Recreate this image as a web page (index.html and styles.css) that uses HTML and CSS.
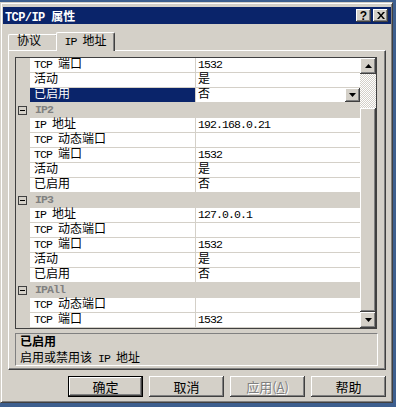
FILE: index.html
```html
<!DOCTYPE html>
<html lang="zh-CN">
<head>
  <meta charset="UTF-8">
  <title>TCP/IP 属性</title>
  <link rel="stylesheet" href="styles.css">
</head>
<body>
  <div class="window">
    <!-- 标题栏 -->
    <div class="titlebar">
      <span class="title"><span class="en">TCP/IP </span>属性</span>
      <div class="caption-btns">
        <div class="cap-btn">?</div>
        <div class="cap-btn">
          <svg width="8" height="7" viewBox="0 0 8 7"><path d="M0 0h2l2 2.5L6 0h2L5 3.5 8 7H6L4 4.5 2 7H0l3-3.5z" fill="#000"/></svg>
        </div>
      </div>
    </div>

    <!-- 选项卡 -->
    <div class="tabs">
      <div class="tab">协议</div>
      <div class="tab active"><span class="en">IP </span>地址</div>
    </div>

    <div class="panel">
      <div class="grid">
        <div class="list">
          <div class="row"><div class="gutter"></div><div class="name"><span class="en">TCP </span>端口</div><div class="value en">1532</div></div>
          <div class="row"><div class="gutter"></div><div class="name">活动</div><div class="value">是</div></div>
          <div class="row selected"><div class="gutter"></div><div class="name">已启用</div><div class="value">否<div class="drop-btn"><svg width="7" height="4" viewBox="0 0 7 4"><path d="M0 0h7L3.5 4z" fill="#000"/></svg></div></div></div>

          <div class="row cat"><div class="gutter"><span class="toggle"></span></div><div class="cat-label en">IP2</div></div>
          <div class="row"><div class="gutter"></div><div class="name"><span class="en">IP </span>地址</div><div class="value en">192.168.0.21</div></div>
          <div class="row"><div class="gutter"></div><div class="name"><span class="en">TCP </span>动态端口</div><div class="value"></div></div>
          <div class="row"><div class="gutter"></div><div class="name"><span class="en">TCP </span>端口</div><div class="value en">1532</div></div>
          <div class="row"><div class="gutter"></div><div class="name">活动</div><div class="value">是</div></div>
          <div class="row"><div class="gutter"></div><div class="name">已启用</div><div class="value">否</div></div>

          <div class="row cat"><div class="gutter"><span class="toggle"></span></div><div class="cat-label en">IP3</div></div>
          <div class="row"><div class="gutter"></div><div class="name"><span class="en">IP </span>地址</div><div class="value en">127.0.0.1</div></div>
          <div class="row"><div class="gutter"></div><div class="name"><span class="en">TCP </span>动态端口</div><div class="value"></div></div>
          <div class="row"><div class="gutter"></div><div class="name"><span class="en">TCP </span>端口</div><div class="value en">1532</div></div>
          <div class="row"><div class="gutter"></div><div class="name">活动</div><div class="value">是</div></div>
          <div class="row"><div class="gutter"></div><div class="name">已启用</div><div class="value">否</div></div>

          <div class="row cat"><div class="gutter"><span class="toggle"></span></div><div class="cat-label en">IPAll</div></div>
          <div class="row"><div class="gutter"></div><div class="name"><span class="en">TCP </span>动态端口</div><div class="value"></div></div>
          <div class="row"><div class="gutter"></div><div class="name"><span class="en">TCP </span>端口</div><div class="value en">1532</div></div>
        </div>

        <!-- 滚动条 -->
        <div class="scrollbar">
          <div class="sb-btn"><svg width="7" height="4" viewBox="0 0 7 4"><path d="M3.5 0L7 4H0z" fill="#000"/></svg></div>
          <div class="sb-track"></div>
          <div class="sb-thumb"></div>
          <div class="sb-btn"><svg width="7" height="4" viewBox="0 0 7 4"><path d="M0 0h7L3.5 4z" fill="#000"/></svg></div>
        </div>
      </div>

      <div class="desc">
        <div class="desc-title">已启用</div>
        <div>启用或禁用该<span class="en"> IP </span>地址</div>
      </div>
    </div>

    <!-- 按钮 -->
    <div class="actions">
      <div class="btn default">确定</div>
      <div class="btn">取消</div>
      <div class="btn disabled">应用(<u>A</u>)</div>
      <div class="btn">帮助</div>
    </div>
  </div>
</body>
</html>
```

FILE: styles.css
```css
* {
  margin: 0;
  padding: 0;
  box-sizing: border-box;
}

body {
  background: #3d5f8f;
  width: 396px;
  height: 407px;
  overflow: hidden;
  font-family: "Liberation Mono", "Noto Sans CJK SC", sans-serif;
  font-size: 12px;
  color: #000;
}

/* 西文字符：等宽，每字约 6px */
.en {
  font-size: 11.5px;
  letter-spacing: -0.9px;
}

.window {
  margin-top: 2px;
  width: 393px;
  height: 401px;
  background: #d4d0c8;
  border: 1px solid;
  border-color: #d4d0c8 #404040 #404040 #d4d0c8;
  box-shadow: inset 1px 1px #fff, inset -1px -1px #808080;
  padding: 4px 1px 0 2px;
}

/* 标题栏 */
.titlebar {
  height: 17px;
  background: #0a246a;
  color: #fff;
  font-weight: bold;
  display: flex;
  align-items: center;
  justify-content: space-between;
  padding: 0 3px 0 2px;
}

.title .en {
  font-size: 12px;
  letter-spacing: -0.6px;
}

.caption-btns {
  display: flex;
  gap: 2px;
}

.cap-btn {
  width: 15px;
  height: 13px;
  background: #d4d0c8;
  color: #000;
  font-family: "Liberation Sans", sans-serif;
  font-size: 12px;
  font-weight: bold;
  display: flex;
  align-items: center;
  justify-content: center;
  box-shadow: inset -1px -1px #404040, inset 1px 1px #fff, inset -2px -2px #808080;
}

/* 选项卡 */
.tabs {
  height: 26px;
  padding-left: 5px;
  display: flex;
  align-items: flex-end;
}

.tab {
  height: 16px;
  width: 50px;
  padding-left: 8px;
  line-height: 15px;
  border-top: 1px solid #fff;
  border-left: 1px solid #fff;
  border-right: 1px solid #404040;
  border-radius: 2px 2px 0 0;
  box-shadow: inset -1px 0 #808080;
}

.tab.active {
  position: relative;
  z-index: 1;
  height: 19px;
  width: 59px;
  margin-left: -2px;
  margin-bottom: -1px;
  padding-left: 0;
  text-align: center;
  line-height: 17px;
  background: #d4d0c8;
}

.panel {
  margin-left: 5px;
  width: 378px;
  height: 320px;
  border: 1px solid;
  border-color: #fff #404040 #404040 #fff;
  box-shadow: inset -1px -1px #808080;
  padding: 6px 0 0 6px;
}

/* 属性表 */
.grid {
  display: flex;
  width: 362px;
  height: 272px;
  border: 1px solid #404040;
  background: #fff;
}

.list {
  width: 344px;
}

.row {
  display: flex;
  height: 15px;
  line-height: 14px;
}

.gutter {
  width: 14px;
  flex: none;
  background: #d4d0c8;
  display: flex;
  align-items: center;
}

.name {
  width: 166px;
  flex: none;
  padding-left: 4px;
  border-bottom: 1px solid #d4d0c8;
  border-right: 1px solid #d4d0c8;
  white-space: nowrap;
}

.value {
  flex: 1;
  display: flex;
  padding-left: 2px;
  border-bottom: 1px solid #d4d0c8;
}

.row.selected .name {
  background: #0a246a;
  color: #fff;
}

.drop-btn {
  margin-left: auto;
  width: 15px;
  height: 14px;
  background: #d4d0c8;
  display: flex;
  align-items: center;
  justify-content: center;
  box-shadow: inset -1px -1px #404040, inset 1px 1px #fff, inset -2px -2px #808080;
}

.row.cat {
  background: #d4d0c8;
}

.toggle {
  width: 9px;
  height: 9px;
  margin-left: 2px;
  border: 1px solid #404040;
  display: flex;
  align-items: center;
  justify-content: center;
}

.toggle::after {
  content: "";
  width: 5px;
  height: 1px;
  background: #000;
}

.cat-label {
  padding-left: 5px;
  font-weight: bold;
  color: #808080;
}

/* 滚动条 */
.scrollbar {
  width: 16px;
  display: flex;
  flex-direction: column;
}

.sb-btn {
  height: 16px;
  background: #d4d0c8;
  display: flex;
  align-items: center;
  justify-content: center;
  box-shadow: inset -1px -1px #404040, inset 1px 1px #fff, inset -2px -2px #808080;
}

.sb-track {
  height: 34px;
  background: repeating-conic-gradient(#d4d0c8 0 25%, #fff 0 50%) 0 0 / 2px 2px;
}

.sb-thumb {
  flex: 1;
  background: #d4d0c8;
  box-shadow: inset -1px -1px #404040, inset 1px 1px #fff, inset -2px -2px #808080;
}

/* 说明 */
.desc {
  margin-top: 4px;
  width: 363px;
  height: 33px;
  border: 1px solid;
  border-color: #808080 #fff #fff #808080;
  padding: 2px 0 0 4px;
  line-height: 15px;
}

.desc-title {
  font-weight: bold;
}

/* 按钮 */
.actions {
  width: 383px;
  margin-top: 6px;
  display: flex;
  justify-content: flex-end;
  gap: 6px;
}

.btn {
  width: 75px;
  height: 21px;
  font-family: "Noto Sans CJK SC", sans-serif;
  font-size: 13px;
  display: flex;
  align-items: center;
  justify-content: center;
  box-shadow: inset -1px -1px #404040, inset 1px 1px #fff, inset -2px -2px #808080;
}

.btn.default {
  border: 1px solid #000;
}

.btn.disabled {
  color: #808080;
  text-shadow: 1px 1px #fff;
}
```
